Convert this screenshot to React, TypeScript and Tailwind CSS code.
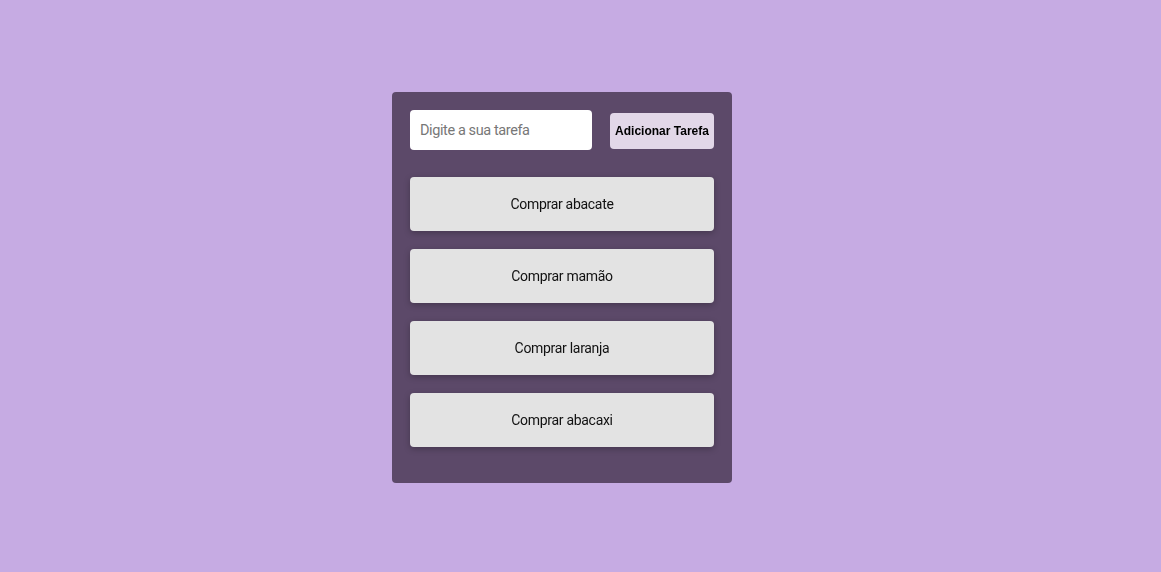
import React from "react";

const items = ["Comprar abacate", "Comprar mamão", "Comprar laranja", "Comprar abacaxi"];

export default function App() {
  return (
    <div className="min-h-[572px] w-full bg-[#c6abe3] pt-[92px]">
      <div className="ml-[392px] w-[340px] rounded-[4px] bg-[#5c4969] px-[18px] pt-[18px] pb-[18px]">
        <div className="flex items-center gap-[18px]">
          <input
            type="text"
            placeholder="Digite a sua tarefa"
            autoFocus
            className="h-[40px] w-[182px] rounded-[4px] bg-white px-[10px] text-[14.5px] tracking-[-0.4px] text-black outline-none placeholder:text-[#777]"
            style={{ fontFamily: "Roboto, sans-serif" }}
          />
          <button
            className="mt-[2px] h-[36px] w-[104px] rounded-[4px] bg-[#e2d7e8] text-[12px] font-bold text-black"
            style={{ fontFamily: "'Liberation Sans', Arial, sans-serif" }}
          >
            Adicionar Tarefa
          </button>
        </div>
        <div className="mt-[27px] flex flex-col gap-[18px]">
          {items.map((t) => (
            <div
              key={t}
              className="flex h-[54px] items-center justify-center rounded-[4px] bg-[#e3e3e3] text-[14px] tracking-[-0.3px] text-[#111] shadow-[0_2px_6px_rgba(0,0,0,0.25)]"
              style={{ fontFamily: "Roboto, sans-serif" }}
            >
              {t}
            </div>
          ))}
        </div>
        <div className="h-[18px]" />
      </div>
    </div>
  );
}
